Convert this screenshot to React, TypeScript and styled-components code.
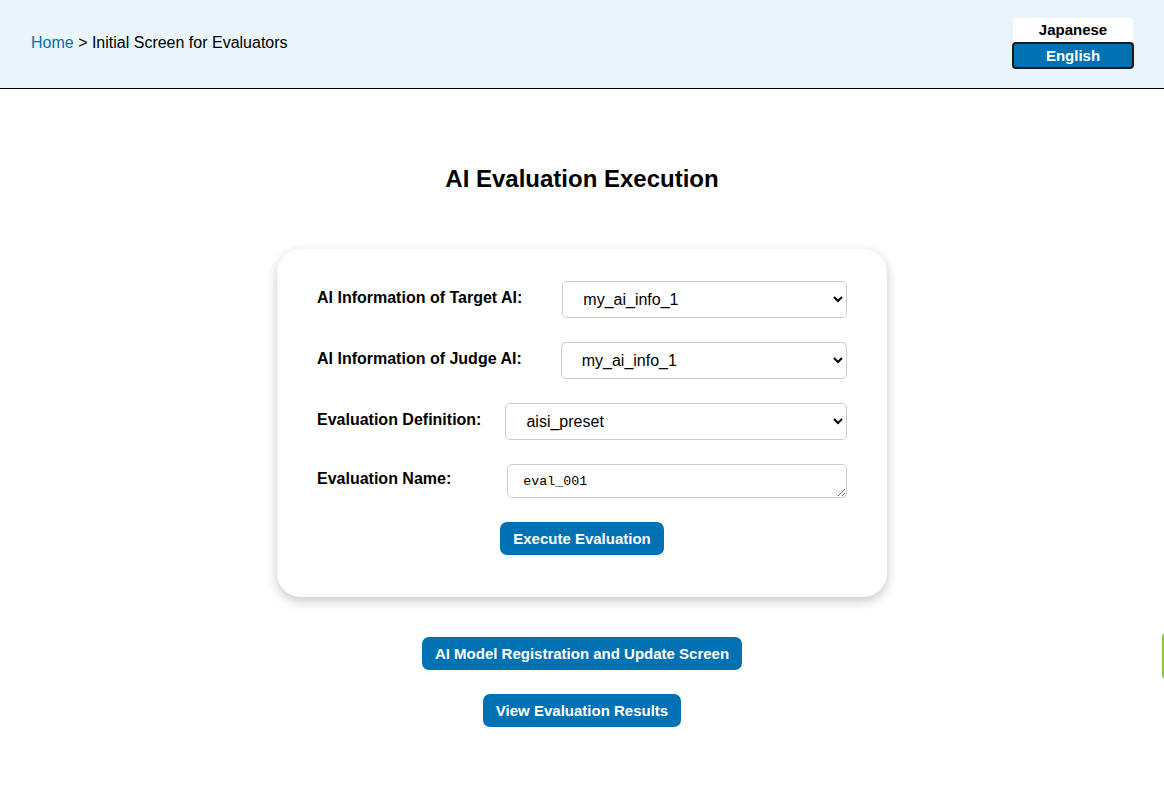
import React from "react";
import styled, { createGlobalStyle } from "styled-components";

const Global = createGlobalStyle`
  html, body { margin: 0; padding: 0; background: #fff; }
  body { font-family: "Liberation Sans", Arial, sans-serif; color: #000; }
  * { box-sizing: border-box; }
`;

const Header = styled.header`
  height: 89px;
  background: #e9f4fb;
  border-bottom: 1px solid #000;
  display: flex;
  align-items: center;
  justify-content: space-between;
  padding: 0 30px 0 31px;
`;

const Crumbs = styled.nav`
  font-size: 16px;
  margin-top: -2px;
  a { color: #0a6ea8; text-decoration: none; }
`;

const LangBox = styled.div`
  display: flex;
  flex-direction: column;
  width: 122px;
  margin-top: -2px;
`;

const LangButton = styled.button<{ $active?: boolean }>`
  font-family: "Liberation Sans", Arial, sans-serif;
  font-weight: bold;
  height: ${(p) => (p.$active ? "27px" : "24px")};
  font-size: 15px;
  background: ${(p) => (p.$active ? "#0071b3" : "#fff")};
  color: ${(p) => (p.$active ? "#fff" : "#000")};
  border: ${(p) => (p.$active ? "2px solid #1a1a1a" : "none")};
  border-radius: ${(p) => (p.$active ? "4px" : "4px 4px 0 0")};
  margin: ${(p) => (p.$active ? "0" : "0 1px")};
  padding: 0;
  cursor: pointer;
`;

const Main = styled.main`
  display: flex;
  flex-direction: column;
  align-items: center;
  padding-top: 76px;
`;

const Title = styled.h1`
  margin: 0 0 56px;
  font-size: 24px;
  font-weight: bold;
  line-height: 28px;
`;

const Card = styled.section`
  width: 610px;
  background: #fff;
  border-radius: 24px;
  box-shadow: 0 4px 12px rgba(0, 0, 0, 0.22);
  padding: 32px 40px 42px;
  display: flex;
  flex-direction: column;
`;

const Row = styled.div<{ $gap: number }>`
  display: flex;
  align-items: center;
  gap: ${(p) => p.$gap}px;
  margin-bottom: 24px;
`;

const Label = styled.label`
  font-weight: bold;
  font-size: 16px;
  white-space: nowrap;
  margin-top: -4px;
`;

const Select = styled.select`
  flex: 1;
  height: 37px;
  font-family: "Liberation Sans", Arial, sans-serif;
  font-size: 16px;
  padding: 0 12px 0 16px;
  border: 1px solid #ccc;
  border-radius: 5px;
  background: #fff;
  color: #000;
`;

const TextArea = styled.textarea`
  flex: 1;
  height: 34px;
  font-family: "Liberation Mono", monospace;
  font-size: 13.33px;
  line-height: 16px;
  padding: 9px 15px 5px;
  border: 1px solid #ccc;
  border-radius: 5px;
  resize: vertical;
  color: #000;
`;

const Actions = styled.div`
  display: flex;
  justify-content: center;
`;

const Button = styled.button`
  background: #0071b3;
  color: #fff;
  border: none;
  border-radius: 7px;
  height: 33px;
  padding: 0 13px;
  font-family: "Liberation Sans", Arial, sans-serif;
  font-weight: bold;
  font-size: 15px;
  cursor: pointer;
`;

const Links = styled.div`
  display: flex;
  flex-direction: column;
  align-items: center;
  gap: 24px;
  margin-top: 40px;
`;

const SideTab = styled.div`
  position: fixed;
  right: -6px;
  top: 633px;
  width: 8px;
  height: 46px;
  background: #8dc63f;
  border-radius: 4px 0 0 4px;
`;

export default function App() {
  return (
    <>
      <Global />
      <Header>
        <Crumbs>
          <a href="#">Home</a> &gt; Initial Screen for Evaluators
        </Crumbs>
        <LangBox>
          <LangButton>Japanese</LangButton>
          <LangButton $active>English</LangButton>
        </LangBox>
      </Header>
      <Main>
        <Title>AI Evaluation Execution</Title>
        <Card>
          <Row $gap={40}>
            <Label>AI Information of Target AI:</Label>
            <Select defaultValue="my_ai_info_1">
              <option>my_ai_info_1</option>
            </Select>
          </Row>
          <Row $gap={39}>
            <Label>AI Information of Judge AI:</Label>
            <Select defaultValue="my_ai_info_1">
              <option>my_ai_info_1</option>
            </Select>
          </Row>
          <Row $gap={24}>
            <Label>Evaluation Definition:</Label>
            <Select defaultValue="aisi_preset">
              <option>aisi_preset</option>
            </Select>
          </Row>
          <Row $gap={56}>
            <Label>Evaluation Name:</Label>
            <TextArea defaultValue="eval_001" />
          </Row>
          <Actions>
            <Button>Execute Evaluation</Button>
          </Actions>
        </Card>
        <Links>
          <Button>AI Model Registration and Update Screen</Button>
          <Button>View Evaluation Results</Button>
        </Links>
      </Main>
      <SideTab />
    </>
  );
}
